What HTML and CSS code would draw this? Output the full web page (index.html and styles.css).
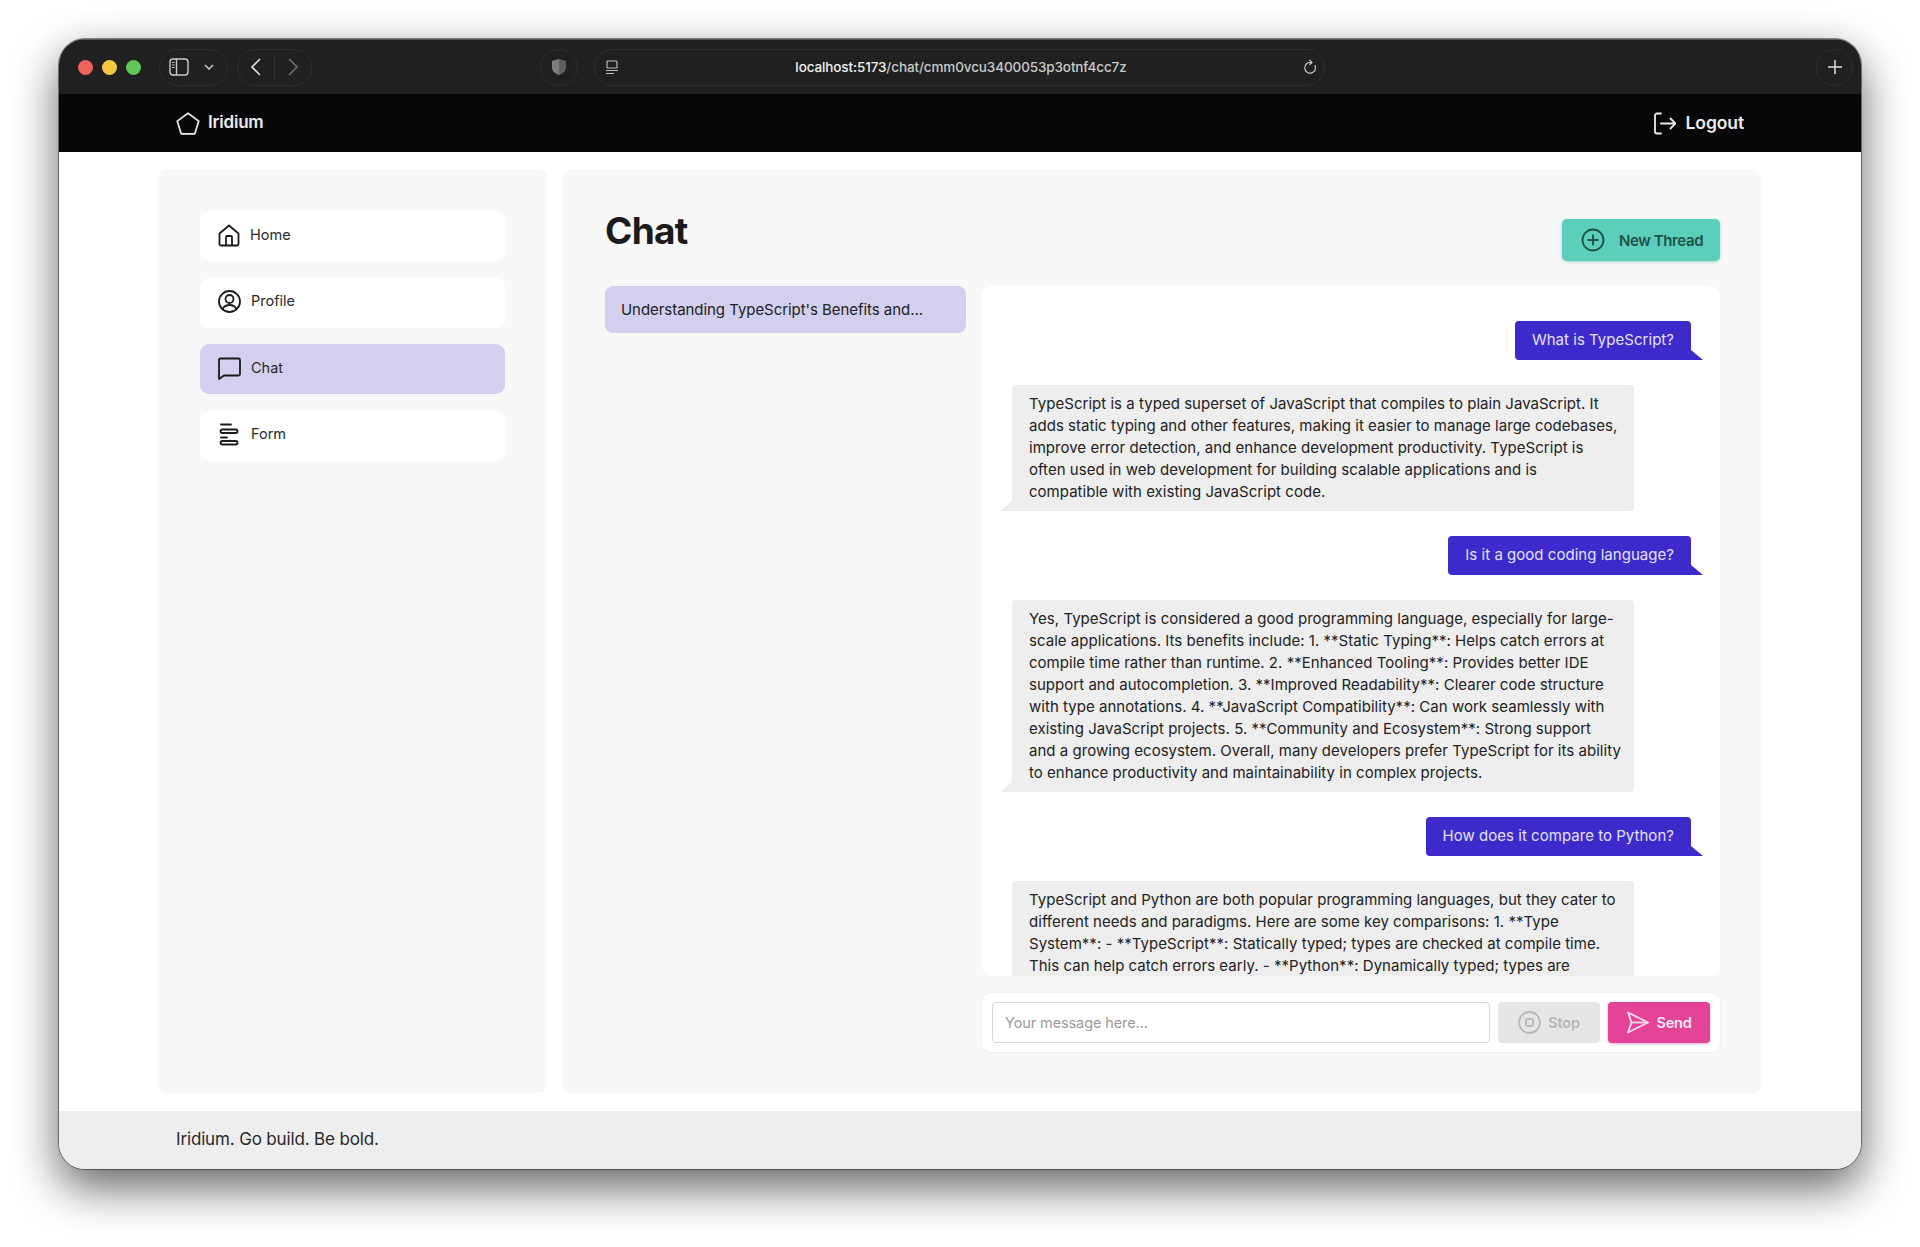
FILE: index.html
```html
<!DOCTYPE html>
<html lang="en">
<head>
<meta charset="utf-8">
<title>Iridium</title>
<link rel="stylesheet" href="styles.css">
</head>
<body>
<div class="window">
  <div class="toolbar">
    <div class="lights"><span class="light red"></span><span class="light yellow"></span><span class="light green"></span></div>
    <div class="pill pill-side">
      <svg width="20" height="18" viewBox="0 0 20 18" fill="none" stroke="#c9c9c9" stroke-width="1.4"><rect x="1" y="1" width="18" height="16" rx="3"/><path d="M7.5 1v16"/><path d="M3 4.5h2.5M3 7h2.5M3 9.500h2.500" stroke-width="1.200"/></svg>
      <svg class="chev" width="10" height="6" viewBox="0 0 10 6" fill="none" stroke="#c9c9c9" stroke-width="1.500"><path d="M1 1l4 4 4-4"/></svg>
    </div>
    <div class="pill pill-nav">
      <svg width="10" height="18" viewBox="0 0 10 18" fill="none" stroke="#d8d8d8" stroke-width="1.700"><path d="M9 1L1 9l8 8"/></svg>
      <span class="pill-sep"></span>
      <svg width="10" height="18" viewBox="0 0 10 18" fill="none" stroke="#6d6d6d" stroke-width="1.700"><path d="M1 1l8 8-8 8"/></svg>
    </div>
    <div class="pill pill-shield">
      <svg width="16" height="18" viewBox="0 0 16 18"><path d="M8 1l7 2v6c0 4-3 6.500-7 8-4-1.500-7-4-7-8V3z" fill="#5f5f5f"/><path d="M8 1v16c-4-1.500-7-4-7-8V3z" fill="#7c7c7c"/></svg>
    </div>
    <div class="pill pill-url">
      <svg class="url-page" width="14" height="15" viewBox="0 0 14 15" fill="none" stroke="#bdbdbd" stroke-width="1.200"><rect x="2" y="1" width="10" height="7" rx="1"/><path d="M1 10.500h12M1 13.500h8"/></svg>
      <span class="url-text"><b>localhost:5173</b>/chat/cmm0vcu3400053p3otnf4cc7z</span>
      <svg class="url-reload" width="14" height="16" viewBox="0 0 14 16" fill="none" stroke="#c9c9c9" stroke-width="1.200"><path d="M11.800 6a5.400 5.400 0 1 1-3.800-2.600"/><path d="M6.500 1l2.500 2.400L6.500 5.800"/></svg>
    </div>
    <div class="pill pill-plus">
      <svg width="16" height="16" viewBox="0 0 16 16" fill="none" stroke="#dedede" stroke-width="1.500"><path d="M8 1v14M1 8h14"/></svg>
    </div>
  </div>
  <header class="appbar">
    <div class="brand">
      <svg width="24" height="23" viewBox="0 0 24 23" fill="none" stroke="#ececec" stroke-width="1.700" stroke-linejoin="round"><path d="M12 1.200l10.800 7.900-4.100 12.800H5.300L1.200 9.100z"/></svg>
      <span>Iridium</span>
    </div>
    <div class="logout">
      <svg width="22" height="23" viewBox="0 0 22 23" fill="none" stroke="#ececec" stroke-width="1.800" stroke-linecap="round" stroke-linejoin="round"><path d="M7 1.500H3a2 2 0 0 0-2 2v16a2 2 0 0 0 2 2h4"/><path d="M7 11.500h14M16.500 6.500l5 5-5 5"/></svg>
      <span>Logout</span>
    </div>
  </header>
  <div class="content">
    <aside class="sidebar">
      <a class="nav-item">
        <svg width="22" height="23" viewBox="0 0 22 23" fill="none" stroke="#1b1b1b" stroke-width="1.800" stroke-linejoin="round"><path d="M1.500 9.500L11 1.500l9.500 8V20a1.500 1.500 0 0 1-1.500 1.500H3A1.500 1.500 0 0 1 1.500 20z"/><path d="M8 21.500V13a1 1 0 0 1 1-1h4a1 1 0 0 1 1 1v8.500"/></svg>
        <span>Home</span>
      </a>
      <a class="nav-item">
        <svg width="23" height="23" viewBox="0 0 23 23" fill="none" stroke="#1b1b1b" stroke-width="1.800"><circle cx="11.500" cy="11.500" r="10.500"/><circle cx="11.500" cy="9" r="4"/><path d="M4.500 19.200c1.300-3 3.800-4.200 7-4.200s5.700 1.200 7 4.200"/></svg>
        <span>Profile</span>
      </a>
      <a class="nav-item active">
        <svg width="23" height="23" viewBox="0 0 23 23" fill="none" stroke="#1b1b1b" stroke-width="1.800" stroke-linejoin="round"><path d="M1 3a1.500 1.500 0 0 1 1.500-1.500h18A1.500 1.500 0 0 1 22 3v14a1.500 1.500 0 0 1-1.500 1.500H6L1 22z"/></svg>
        <span>Chat</span>
      </a>
      <a class="nav-item">
        <svg width="23" height="23" viewBox="0 0 23 23" fill="none" stroke="#1b1b1b" stroke-width="1.800" stroke-linecap="round"><path d="M3 1.500h10M3 14.500h6"/><rect x="2.500" y="6.500" width="17" height="3.500" rx="1.700"/><rect x="2.500" y="18" width="17" height="3.500" rx="1.700"/></svg>
        <span>Form</span>
      </a>
    </aside>
    <main class="panel">
      <div class="panel-head">
        <h1>Chat</h1>
        <button class="btn-new">
          <svg width="24" height="24" viewBox="0 0 24 24" fill="none" stroke="#1f534a" stroke-width="1.900"><circle cx="12" cy="12" r="10.500"/><path d="M12 6.500v11M6.500 12h11"/></svg>
          <span>New Thread</span>
        </button>
      </div>
      <div class="panel-body">
        <div class="threads">
          <div class="thread">Understanding TypeScript's Benefits and...</div>
        </div>
        <div class="chat-col">
          <div class="messages">
            <div class="msg user">What is TypeScript?</div>
            <div class="msg bot">TypeScript is a typed superset of JavaScript that compiles to plain JavaScript. It<br>adds static typing and other features, making it easier to manage large codebases,<br>improve error detection, and enhance development productivity. TypeScript is<br>often used in web development for building scalable applications and is<br>compatible with existing JavaScript code.</div>
            <div class="msg user">Is it a good coding language?</div>
            <div class="msg bot">Yes, TypeScript is considered a good programming language, especially for large-<br>scale applications. Its benefits include: 1. **Static Typing**: Helps catch errors at<br>compile time rather than runtime. 2. **Enhanced Tooling**: Provides better IDE<br>support and autocompletion. 3. **Improved Readability**: Clearer code structure<br>with type annotations. 4. **JavaScript Compatibility**: Can work seamlessly with<br>existing JavaScript projects. 5. **Community and Ecosystem**: Strong support<br>and a growing ecosystem. Overall, many developers prefer TypeScript for its ability<br>to enhance productivity and maintainability in complex projects.</div>
            <div class="msg user">How does it compare to Python?</div>
            <div class="msg bot last">TypeScript and Python are both popular programming languages, but they cater to<br>different needs and paradigms. Here are some key comparisons: 1. **Type<br>System**: - **TypeScript**: Statically typed; types are checked at compile time.<br>This can help catch errors early. - **Python**: Dynamically typed; types are</div>
          </div>
          <form class="composer">
            <input class="composer-input" type="text" placeholder="Your message here...">
            <button class="btn-stop" type="button">
              <svg width="23" height="23" viewBox="0 0 23 23" fill="none" stroke="#b9b9b9" stroke-width="1.800"><circle cx="11.500" cy="11.500" r="10.500"/><rect x="8" y="8" width="7" height="7" rx="1.500"/></svg>
              <span>Stop</span>
            </button>
            <button class="btn-send" type="button">
              <svg width="23" height="23" viewBox="0 0 23 23" fill="none" stroke="#fbd9ea" stroke-width="1.900" stroke-linejoin="round"><path d="M2 1.500L22 11.500 2 21.500 5.500 11.500z"/><path d="M5.500 11.500H22"/></svg>
              <span>Send</span>
            </button>
          </form>
        </div>
      </div>
    </main>
  </div>
  <footer class="footer">Iridium. Go build. Be bold.</footer>
</div>
</body>
</html>
```

FILE: styles.css
```css
* { box-sizing: border-box; }
html, body { margin: 0; height: 100%; background: #fff; }
body {
  height: 1247px;
  padding: 39px 59px 78px;
  overflow: hidden;
  font-family: "Inter", "Liberation Sans", sans-serif;
  color: #1b1b1b;
}
svg { flex: none; display: block; }

.window {
  height: 1130px;
  border-radius: 26px;
  overflow: hidden;
  background: #fff;
  display: flex;
  flex-direction: column;
  box-shadow: 0 0 0 1px rgba(40,40,40,.55), 0 18px 46px rgba(0,0,0,.62);
}

/* browser chrome */
.toolbar {
  height: 55px;
  flex: none;
  background: #202020;
  border-top: 1px solid #5a5a5a;
  display: flex;
  align-items: center;
  padding-left: 19px;
}
.lights { display: flex; gap: 9px; width: 81px; }
.light { width: 15px; height: 15px; border-radius: 50%; }
.red { background: #f0625d; }
.yellow { background: #f6c83f; }
.green { background: #5fc65a; }
.pill {
  height: 37px;
  border: 1px solid #2e2e2e;
  border-radius: 19px;
  display: flex;
  align-items: center;
}
.pill-side { width: 69px; padding-left: 9px; gap: 15px; }
.pill-nav { width: 75px; margin-left: 9px; justify-content: space-between; padding: 0 13px; }
.pill-sep { width: 1px; height: 26px; background: #333; }
.pill-shield { width: 38px; margin-left: 228px; justify-content: center; }
.pill-url { width: 731px; margin-left: 16px; padding: 0 7px 0 10px; position: relative; justify-content: space-between; }
.url-text {
  font-size: 13.500px;
  color: #c9c9c9;
  font-weight: 500;
  letter-spacing: -.12px;
  white-space: nowrap;
}
.url-text b { color: #f0f0f0; font-weight: 500; }
.pill-plus { width: 37px; margin-left: 491px; justify-content: center; }

/* app bar */
.appbar {
  height: 58px;
  flex: none;
  background: #070709;
  color: #ececec;
  display: flex;
  align-items: center;
  justify-content: space-between;
  padding: 0 117px;
}
.brand { display: flex; align-items: center; gap: 8px; font-size: 17px; font-weight: 600; letter-spacing: -.2px; }
.logout { display: flex; align-items: center; gap: 10px; font-size: 17.500px; font-weight: 600; letter-spacing: -.1px; }
.brand span, .logout span { position: relative; top: -1px; }

/* content */
.content {
  flex: 1;
  min-height: 0;
  display: flex;
  gap: 16px;
  padding: 17px 100px 17px 99px;
}
.sidebar {
  width: 389px;
  flex: none;
  background: #f8f8f8;
  border-radius: 9px;
  padding: 42px;
  display: flex;
  flex-direction: column;
  gap: 16.670px;
}
.nav-item {
  height: 50px;
  background: #fff;
  border-radius: 9px;
  display: flex;
  align-items: center;
  gap: 10px;
  padding: 0 0 0 18px;
  font-size: 14.500px;
  font-weight: 400;
  color: #2a2a2a;
}
.nav-item svg { position: relative; top: -1px; }
.nav-item span { position: relative; top: -2px; }
.nav-item.active { background: #d3cfee; }

.panel {
  flex: 1;
  min-width: 0;
  background: #f8f8f8;
  border-radius: 9px;
  padding: 42px 41px 42px 42px;
  display: flex;
  flex-direction: column;
}
.panel-head {
  height: 50px;
  flex: none;
  display: flex;
  justify-content: space-between;
  align-items: flex-end;
  margin-bottom: 25px;
}
h1 {
  margin: -2px 0 0;
  align-self: flex-start;
  font-size: 37px;
  font-weight: 700;
  line-height: 44px;
  letter-spacing: -.7px;
  color: #1b1b1b;
}
.btn-new {
  width: 158px;
  height: 42px;
  border: 0;
  border-radius: 5px;
  background: #5bcfbb;
  box-shadow: 0 1px 3px rgba(60,180,160,.5);
  color: #1f534a;
  font: 600 15px "Inter", sans-serif;
  letter-spacing: -.4px;
  display: flex;
  align-items: center;
  gap: 14px;
  padding: 0 0 0 19px;
}
.panel-body { flex: 1; min-height: 0; display: flex; gap: 16px; }
.threads { width: 361px; flex: none; }
.thread {
  height: 47px;
  background: #d3cfee;
  border-radius: 8px;
  padding: 0 16px;
  display: flex;
  align-items: center;
  font-size: 15px;
  letter-spacing: -.05px;
  white-space: nowrap;
  color: #222;
}
.chat-col { flex: 1; min-width: 0; display: flex; flex-direction: column; gap: 17px; }
.messages {
  flex: 1;
  min-height: 0;
  overflow: hidden;
  background: #fff;
  border-radius: 10px;
  padding: 35px 29px 0 30px;
  display: flex;
  flex-direction: column;
  align-items: flex-start;
  gap: 25px;
}
.msg {
  flex: none;
  position: relative;
  padding: 8px 17px;
  font-size: 15px;
  line-height: 22px;
  letter-spacing: .03px;
  white-space: nowrap;
}
.msg::after {
  content: "";
  position: absolute;
  bottom: 0;
  width: 12px;
  height: 10px;
}
.user {
  align-self: flex-end;
  min-height: 39px;
  background: #3d2acb;
  color: #e4e1ff;
  border-radius: 4px 4px 0 4px;
  padding: 8px 17px 9px;
}
.user::after {
  left: 100%;
  background: #3d2acb;
  clip-path: polygon(0 0, 100% 100%, 0 100%);
}
.bot {
  width: 622px;
  background: #eeeeee;
  color: #222;
  border-radius: 4px 4px 4px 0;
}
.bot::after {
  right: 100%;
  background: #eeeeee;
  clip-path: polygon(100% 0, 100% 100%, 0 100%);
}
.bot.last { padding-bottom: 40px; }
.composer {
  height: 59px;
  flex: none;
  background: #fff;
  border-radius: 9px;
  box-shadow: 0 0 0 1px #f2f2f2;
  padding: 9px 10px 9px 10px;
  display: flex;
  gap: 8px;
}
.composer-input {
  width: 498px;
  height: 41px;
  border: 1px solid #d8d8d8;
  border-radius: 4px;
  padding: 0 12px;
  font: 400 14.500px "Inter", sans-serif;
  letter-spacing: -.1px;
  outline: 0;
}
.composer-input::placeholder { color: #9a9a9a; opacity: 1; }
.btn-stop, .btn-send {
  width: 102px;
  height: 41px;
  border: 0;
  border-radius: 4px;
  display: flex;
  align-items: center;
  justify-content: center;
  gap: 7px;
  font: 600 14.500px "Inter", sans-serif;
  letter-spacing: -.2px;
}
.btn-stop { background: #e6e6e6; color: #b5b5b5; }
.btn-send { background: #e44497; color: #fdeaf3; box-shadow: 0 1px 3px rgba(228,68,151,.45); }

.footer {
  height: 58px;
  flex: none;
  background: #eeeeee;
  padding: 0 117px 2px;
  display: flex;
  align-items: center;
  font-size: 17px;
  letter-spacing: -.15px;
  color: #2a2a2a;
}
```
